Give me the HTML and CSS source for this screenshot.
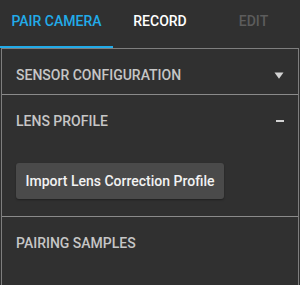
FILE: index.html
```html
<!DOCTYPE html>
<html>
<head>
<meta charset="utf-8">
<link rel="stylesheet" href="styles.css">
</head>
<body>
<div class="app">
  <nav class="tabs">
    <div class="tab tab-active tab-pair">PAIR CAMERA</div>
    <div class="tab tab-record">RECORD</div>
    <div class="tab tab-disabled tab-edit">EDIT</div>
  </nav>
  <div class="panel">
    <section class="section">
      <div class="section-header">
        <span class="section-title">SENSOR CONFIGURATION</span>
        <svg class="icon-caret" width="10" height="7" viewBox="0 0 10 7"><path d="M0.5 0.5 H9.5 L5 6.8 Z" fill="#d2d2d2"/></svg>
      </div>
    </section>
    <section class="section">
      <div class="section-header">
        <span class="section-title">LENS PROFILE</span>
        <span class="icon-minus"></span>
      </div>
      <div class="section-body">
        <button class="btn">Import Lens Correction Profile</button>
      </div>
    </section>
    <section class="section section-last">
      <div class="section-header">
        <span class="section-title">PAIRING SAMPLES</span>
      </div>
    </section>
  </div>
</div>
</body>
</html>
```
FILE: styles.css
```css
* { box-sizing: border-box; }
html, body {
  margin: 0;
  padding: 0;
  background: #303030;
  font-family: Roboto, "Liberation Sans", sans-serif;
}
.app {
  width: 300px;
  height: 285px;
  display: flex;
  flex-direction: column;
  overflow: hidden;
}
.tabs {
  display: flex;
  height: 48px;
}
.tab {
  height: 48px;
  display: flex;
  align-items: center;
  justify-content: center;
  font-size: 14px;
  font-weight: 500;
  color: #ffffff;
  padding-bottom: 5px;
  border-bottom: 2px solid transparent;
}
.tab-pair { width: 113px; }
.tab-record { width: 94px; }
.tab-edit { width: 93px; }
.tab-active {
  color: #22abe9;
  border-bottom-color: #22abe9;
}
.tab-disabled { color: #5c5c5c; }
.panel {
  flex: 1;
  margin: 0 1px;
  border: 1px solid #7e7e7e;
  border-bottom: none;
}
.section {
  border-bottom: 1px solid #8a8a8a;
}
.section-last { border-bottom: none; }
.section-header {
  display: flex;
  align-items: center;
  justify-content: space-between;
  padding: 16px 14px 9px 14px;
  height: 45px;
}
.section-title {
  font-size: 14px;
  line-height: 20px;
  font-weight: 500;
  color: #c6c6c6;
}
.icon-caret {
  display: block;
}
.icon-minus {
  display: block;
  width: 8px;
  height: 2px;
  background: #d2d2d2;
}
.section-body {
  padding: 23px 14px 17px 14px;
}
.btn {
  display: block;
  height: 36px;
  width: 208px;
  padding: 0 8px;
  border: none;
  border-radius: 3px;
  background: #4a4a4a;
  color: #f2f2f2;
  font-family: Roboto, "Liberation Sans", sans-serif;
  font-size: 14px;
  font-weight: 500;
  box-shadow: 0 1px 2px rgba(0,0,0,0.35);
}
```
